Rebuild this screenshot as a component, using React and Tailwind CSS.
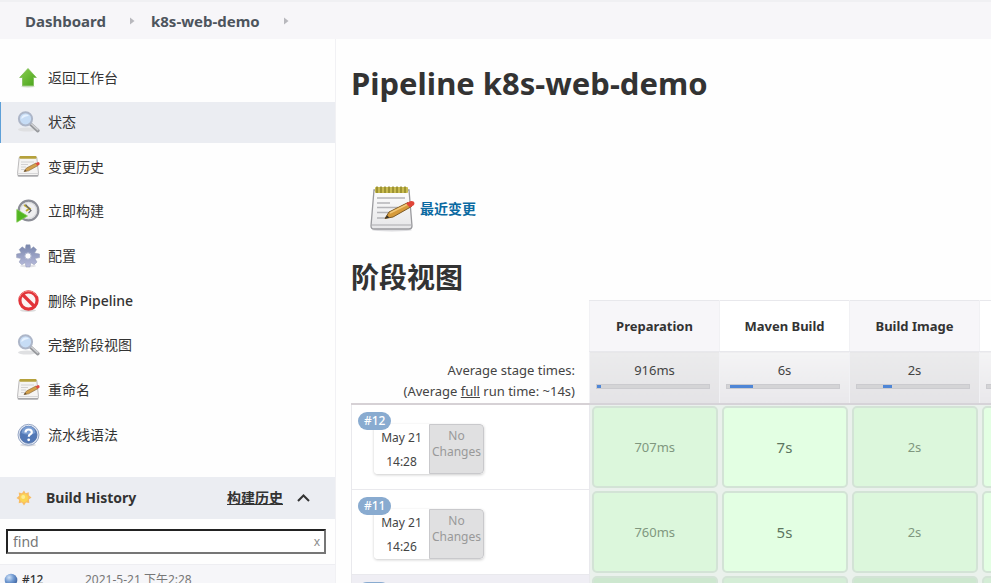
import React from "react";

function ArrowUpIcon() {
  return (
    <svg viewBox="0 0 24 24" className="size-6 shrink-0">
      <defs>
        <linearGradient id="up" x1="0" y1="0" x2="1" y2="1">
          <stop offset="0" stopColor="#8bcf50" />
          <stop offset="1" stopColor="#48a31b" />
        </linearGradient>
      </defs>
      <ellipse cx="12" cy="20.5" rx="7" ry="1.2" fill="#dfe6da" />
      <path d="M12 2.500 L20.300 11.500 H17.500 V19.800 H6.500 V11.500 H3.700 Z" fill="url(#up)" stroke="#7cbb54" strokeWidth="0.8" strokeLinejoin="round" />
    </svg>
  );
}

function SearchIcon() {
  return (
    <svg viewBox="0 0 24 24" className="size-6 shrink-0">
      <ellipse cx="11" cy="19.500" rx="9" ry="2" fill="#dfe0e2" />
      <path d="M15 14.500 L21.800 20.600" stroke="#97999d" strokeWidth="3.600" strokeLinecap="round" />
      <path d="M15.500 14 L21.800 19.600" stroke="#cfd0d3" strokeWidth="1.600" strokeLinecap="round" />
      <circle cx="9.500" cy="8.800" r="6.600" fill="#c6dcf5" stroke="#adb6c8" strokeWidth="2" />
      <path d="M5.300 9 A4.500 4.500 0 0 1 13 5.800 Q9 6 5.300 9Z" fill="#e6f2ff" />
    </svg>
  );
}

function NotepadIcon() {
  return (
    <svg viewBox="0 0 48 48" className="size-12 shrink-0">
      <defs>
        <linearGradient id="paper" x1="0" y1="0" x2="0" y2="1">
          <stop offset="0" stopColor="#fdfdfd" />
          <stop offset="1" stopColor="#e6e6e8" />
        </linearGradient>
      </defs>
      <ellipse cx="24" cy="45" rx="20" ry="1.500" fill="#dddde0" />
      <path d="M6 5 H41 L44 41 Q44 44 41 44 H6 Q3 44 3 41 Z" fill="url(#paper)" stroke="#9a9a9e" strokeWidth="1.300" />
      <path d="M3.500 40 H43.500" stroke="#a9a9ad" strokeWidth="1.200" />
      <rect x="7" y="2" width="33" height="6" rx="1" fill="#c8bb50" />
      <path d="M9 1.500V8M13 1.500V8M17 1.500V8M21 1.500V8M25 1.500V8M29 1.500V8M33 1.500V8M37 1.500V8" stroke="#948a2c" strokeWidth="1.600" />
      <path d="M9 13H37M9 18H22M9 22.500H30M9 27.500H24M9 33H18" stroke="#b4b4b8" strokeWidth="1.300" />
      <path d="M17 33.500 L21 27 L40 17.500 L43.500 21.500 L25 32 Z" fill="#d69a3a" stroke="#7d5a25" strokeWidth="1" />
      <path d="M22 28 L41 18.500" stroke="#f2c878" strokeWidth="1.400" />
      <path d="M38 18.500 L42 16.200 Q46 15.500 46.500 18 L46 20 L42 22.500 Z" fill="#e04438" />
      <path d="M17 33.500 L19 30.200 L21.500 32.700Z" fill="#3b3428" />
    </svg>
  );
}

function SmallNotepadIcon() {
  return (
    <svg viewBox="0 0 24 24" className="size-6 shrink-0">
      <path d="M3.200 2.500 H20.800 L22.500 18.500 Q22.500 21 21 21 H3 Q1.500 21 1.500 18.500 Z" fill="#f5f4f3" stroke="#b4b3b4" strokeWidth="0.900" />
      <path d="M1.800 20.800 H22.200" stroke="#a3a3a6" strokeWidth="1.400" />
      <path d="M2 18.500 H22" stroke="#cfcfd1" strokeWidth="0.800" />
      <rect x="3.500" y="1" width="17" height="2.800" rx="0.800" fill="#b5a13c" />
      <path d="M5 7H18M5 9.500H12M5 12H10M5 14.500H9" stroke="#cecdce" strokeWidth="0.900" />
      <path d="M8 16.500 L10.500 13 L20 8 L22 10.500 L12.500 15.800 Z" fill="#d3a04a" stroke="#8f6f3c" strokeWidth="0.700" />
      <path d="M19.500 8.300 L22.300 7 Q24 7.500 23.600 9.400 L21.500 10.800Z" fill="#df4b42" />
      <path d="M8 16.500 L9.300 14.700 L10.700 16.200Z" fill="#5a4a36" />
    </svg>
  );
}

function ClockIcon() {
  return (
    <svg viewBox="0 0 24 24" className="size-6 shrink-0">
      <circle cx="12.500" cy="11.500" r="9.800" fill="#efeff0" stroke="#8b8d96" strokeWidth="2.200" />
      <circle cx="12.500" cy="11.500" r="8" fill="none" stroke="#d2d3d6" strokeWidth="0.800" />
      <path d="M8 6 L13.500 9.500 L10 12" fill="none" stroke="#c0aa2c" strokeWidth="2" />
      <path d="M9.500 5.500 L15 11.500 L12.500 14" fill="none" stroke="#65666b" strokeWidth="1.200" />
      <path d="M0.800 10.500 L11.500 17 L0.800 23.200 Z" fill="#52b521" stroke="#80cb52" strokeWidth="0.800" />
    </svg>
  );
}

function GearIcon() {
  return (
    <svg viewBox="0 0 24 24" className="size-6 shrink-0">
      <defs>
        <linearGradient id="gear" x1="0" y1="0" x2="0" y2="1">
          <stop offset="0" stopColor="#7886ac" />
          <stop offset="1" stopColor="#b9bcdc" />
        </linearGradient>
      </defs>
      <ellipse cx="12" cy="22" rx="8" ry="1.300" fill="#e3e3e7" />
      <path
        d="M10 0.800H14L14.800 5 17.500 2.800 20.600 5.600 18.500 9 23.500 10V13.600L18.900 14.600 21 18 18.200 20.800 14.900 18.700 14 23H10L9.200 18.700 5.800 20.800 3.100 18 5.200 14.600 0.600 13.600V10L5.200 9 3.200 5.600 6.200 2.800 9.200 5Z"
        fill="url(#gear)"
        stroke="#939bb6"
        strokeWidth="0.5"
        strokeLinejoin="round"
      />
      <circle cx="12" cy="12" r="3.200" fill="#fdfdff" stroke="#a9b1cc" />
    </svg>
  );
}

function ForbiddenIcon() {
  return (
    <svg viewBox="0 0 24 24" className="size-6 shrink-0">
      <ellipse cx="12" cy="21.500" rx="8" ry="1.500" fill="#dcdcdc" />
      <circle cx="12.500" cy="11.500" r="8.600" fill="#fbf3f3" stroke="#e2343a" strokeWidth="3.200" />
      <path d="M6.500 5.500 L18.500 17.500" stroke="#e2343a" strokeWidth="3.200" />
      <path d="M3.500 8.500 A9.500 9.500 0 0 1 20.500 6.500" fill="none" stroke="#f58a86" strokeWidth="1" />
    </svg>
  );
}

function HelpIcon() {
  return (
    <svg viewBox="0 0 24 24" className="size-6 shrink-0">
      <ellipse cx="12" cy="22" rx="8" ry="1.400" fill="#dcdde0" />
      <circle cx="12.500" cy="11.800" r="10.500" fill="#dfe6f2" stroke="#98a8c6" strokeWidth="1" />
      <circle cx="12.500" cy="11.800" r="8.500" fill="#5278b6" stroke="#4a6ba3" strokeWidth="0.800" />
      <path d="M5.500 10 A7 7 0 0 1 19.500 10 Q12 13 5.500 10Z" fill="#7b9ed2" />
      <path d="M9.500 9.500 Q9.500 6.500 12.700 6.500 Q15.800 6.500 15.800 9.200 Q15.800 10.800 14 11.600 Q12.800 12.200 12.800 13.800" fill="none" stroke="#fff" strokeWidth="2.200" />
      <circle cx="12.700" cy="16.800" r="1.400" fill="#fff" />
    </svg>
  );
}

function SunIcon() {
  return (
    <svg viewBox="0 0 16 16" className="size-4 shrink-0">
      <path d="M8 0.500 9.600 3.300 12.800 2.200 12.800 5.300 15.500 7.500 12.900 9.600 13.300 13 10 12.600 8 15.500 6 12.600 2.700 13.300 3.100 9.700 0.500 8 3.200 5.700 2.700 2.500 6 3.300Z" fill="#f8bd63" />
      <circle cx="8" cy="8" r="4.200" fill="#fbd552" />
      <circle cx="7.200" cy="7" r="2" fill="#fdec93" />
    </svg>
  );
}

function BallIcon() {
  return (
    <svg viewBox="0 0 14 14" className="size-[14px] shrink-0">
      <defs>
        <radialGradient id="ball" cx="0.35" cy="0.3" r="0.75">
          <stop offset="0" stopColor="#cfe2f8" />
          <stop offset="0.5" stopColor="#6f98d0" />
          <stop offset="1" stopColor="#3d629e" />
        </radialGradient>
      </defs>
      <circle cx="7" cy="7" r="6.300" fill="url(#ball)" />
    </svg>
  );
}

function Separator() {
  return (
    <svg viewBox="0 0 5 8" className="h-2 w-[5px]" aria-hidden="true">
      <path d="M0 0.500 L4.500 4 L0 7.500Z" fill="#b8b8bd" />
    </svg>
  );
}

const tasks = [
  { label: "返回工作台", icon: <ArrowUpIcon /> },
  { label: "状态", icon: <SearchIcon />, active: true },
  { label: "变更历史", icon: <SmallNotepadIcon /> },
  { label: "立即构建", icon: <ClockIcon /> },
  { label: "配置", icon: <GearIcon /> },
  { label: "删除 ", latin: "Pipeline", icon: <ForbiddenIcon /> },
  { label: "完整阶段视图", icon: <SearchIcon /> },
  { label: "重命名", icon: <SmallNotepadIcon /> },
  { label: "流水线语法", icon: <HelpIcon /> },
];

const stages = [
  { name: "Preparation", average: "916ms", before: 0, share: 4 },
  { name: "Maven Build", average: "6s", before: 3, share: 20 },
  { name: "Build Image", average: "2s", before: 23, share: 8 },
];

const runs = [
  { id: "#12", date: "May 21", time: "14:28", cells: ["707ms", "7s", "2s"] },
  { id: "#11", date: "May 21", time: "14:26", cells: ["760ms", "5s", "2s"] },
  { id: "", date: "", time: "", cells: ["", "", ""], shaded: true },
];

function Sidebar() {
  return (
    <aside className="w-[336px] shrink-0 border-r border-[#f1f1f4]">
      <nav className="mt-[18px] flex h-[398px] flex-col justify-between">
        {tasks.map((task) => (
          <a
            key={task.label}
            href="#"
            className={
              "flex h-[41px] items-center gap-2 border-l pl-[15px] text-[#333333] " +
              (task.active ? "border-[#5ea0d8] bg-[#ebedf2]" : "border-transparent")
            }
          >
            {task.icon}
            <span>
              {task.label}
              {task.latin && <span className="font-medium">{task.latin}</span>}
            </span>
          </a>
        ))}
      </nav>

      <section className="mt-[22px]">
        <div className="flex h-[42px] items-center bg-[#ebedf2] pl-4 font-bold text-[#333333]">
          <SunIcon />
          <h2 className="ml-[14px]">Build History</h2>
          <a href="#" className="ml-auto underline">构建历史</a>
          <button type="button" aria-label="Collapse" className="mr-[25px] ml-[14px]">
            <svg viewBox="0 0 13 8" className="h-2 w-[13px]" fill="none" stroke="#333333" strokeWidth="2">
              <path d="M1 7 L6.500 1.500 L12 7" />
            </svg>
          </button>
        </div>
        <div className="mt-[10px] mr-[9px] mb-[10px] ml-[6px] flex h-[25px] items-center border-2 border-[#767676] border-t-[#222222] border-l-[#222222] bg-white pr-1 pl-[5px]">
          <input
            type="text"
            aria-label="find"
            placeholder="find"
            className="min-w-0 flex-1 bg-transparent outline-none placeholder:text-[#777777]"
          />
          <button type="button" aria-label="Clear" className="text-xs leading-4 text-[#8c8c8c]">x</button>
        </div>
        <div className="flex h-[30px] items-center border-t border-[#eeeef2] bg-[#f6f6f9] pl-1 text-xs">
          <BallIcon />
          <a href="#" className="ml-1 w-[63px] font-medium text-[#333333]">#12</a>
          <a href="#" className="text-[#777777]">2021-5-21 下午2:28</a>
        </div>
      </section>
    </aside>
  );
}

function RunCard({ run }) {
  return (
    <div className="relative h-[84px] pt-[19px] pl-[22px]">
      <span className="absolute top-[7px] left-[6px] h-[18px] min-w-8 rounded-full bg-[#89abd0] px-[6px] text-xs leading-[18px] font-medium text-white">
        {run.id}
      </span>
      {run.date && (
        <div className="flex h-[50px] w-[110px] overflow-hidden rounded-sm text-center shadow-[0_1px_3px_rgba(0,0,0,0.2)]">
          <div className="w-[55px] bg-white text-xs leading-6 text-[#444444]">
            <div className="pt-[2px]">{run.date}</div>
            <div>{run.time}</div>
          </div>
          <div className="flex-1 rounded-r-sm border border-[#c9c9cc] bg-[#e0e0e1] pt-[3px] text-xs leading-4 text-[#999999]">
            <div>No</div>
            <div className="flex justify-center">Changes</div>
          </div>
        </div>
      )}
    </div>
  );
}

function cellTone(i, shaded) {
  const odd = i % 2 === 1;
  if (shaded) return odd ? "bg-[#d4edd6]" : "bg-[#cde7cf]";
  return odd ? "bg-[#e3ffe3]" : "bg-[#dcf7dc]";
}

function StageView() {
  return (
    <table className="w-[758px] table-fixed border-collapse">
      <colgroup>
        <col className="w-[238px]" />
        <col className="w-[130px]" />
        <col className="w-[130px]" />
        <col className="w-[130px]" />
        <col className="w-[130px]" />
      </colgroup>
      <thead>
        <tr className="h-[51px]">
          <td rowSpan={2} className="border-b-2 border-[#d6d1d5] pr-[14px] pb-px text-right align-bottom text-[13px] leading-[21px] text-[#444444]">
            <div>Average stage times:</div>
            <div>(Average <span className="underline">full</span> run time: ~14s)</div>
          </td>
          {stages.map((stage) => (
            <th
              key={stage.name}
              scope="col"
              className="border border-[#e8e8ec] border-x-[#f1f1f4] text-[13px] font-bold text-[#333333] odd:bg-white even:bg-[#f7f6f9]"
            >
              {stage.name}
            </th>
          ))}
          <td className="border border-[#e8e8ec] border-x-[#f1f1f4] bg-white" />
        </tr>
        <tr className="h-[52px]">
          {stages.map((stage) => (
            <td
              key={stage.name}
              className="border-x border-b-2 border-x-[#f1f1f4] border-b-[#d6d3d8] bg-linear-to-b px-[6px] text-center align-top text-[13px] text-[#444444] odd:from-[#ebebec] odd:to-[#e4e3e6] even:from-[#f4f4f5] even:to-[#e9e8eb]"
            >
              <div className="pt-2 leading-5">{stage.average}</div>
              <div className="mt-1 mr-[3px] flex h-[5px] border border-[#cbcbcf] bg-[#d4d4d6]">
                <span style={{ width: stage.before + "%" }} />
                <span className="bg-[#4f86d6]" style={{ width: stage.share + "%" }} />
              </div>
            </td>
          ))}
          <td className="border-b-2 border-b-[#d6d3d8] bg-linear-to-b from-[#f4f4f5] to-[#e9e8eb] px-[6px] align-top">
            <div className="mt-8 h-[5px] border border-[#cbcbcf] bg-[#d4d4d6]" />
          </td>
        </tr>
      </thead>
      <tbody>
        {runs.map((run, n) => (
          <tr key={n} className="h-[85px]">
            <td className={"border border-[#e9e9ed] p-0 align-top " + (run.shaded ? "bg-[#efeef4]" : "bg-white")}>
              <RunCard run={run} />
            </td>
            {[...run.cells, ""].map((cell, i) => (
              <td key={i} className="h-[85px] bg-[#eaf1ec] px-[2px] py-px">
                <div
                  className={
                    "flex h-[82px] items-center justify-center rounded-[5px] border-2 border-[#d3e3d6] " +
                    (i % 2 ? "text-[15px] text-[#5d7560] " : "text-[13px] text-[#80977f] ") +
                    cellTone(i, run.shaded)
                  }
                >
                  {cell}
                </div>
              </td>
            ))}
          </tr>
        ))}
      </tbody>
    </table>
  );
}

export default function App() {
  return (
    <div className="flex h-screen flex-col overflow-hidden bg-[#fefefe] font-['Noto_Sans','Noto_Sans_CJK_SC',sans-serif] text-sm leading-5 text-[#333333]">
      <header className="flex h-[39px] shrink-0 items-center border-t-2 border-[#f0f0f3] bg-[#f7f6f9] pl-[25px] text-[15px] font-bold text-[#4d545d]">
        <a href="#">Dashboard</a>
        <span className="mr-4 ml-6"><Separator /></span>
        <a href="#">k8s-web-demo</a>
        <span className="ml-6"><Separator /></span>
      </header>
      <div className="flex min-h-0 flex-1">
        <Sidebar />
        <main className="min-w-0 flex-1 overflow-hidden pl-[15px]">
          <h1 className="pt-6 text-[31px] leading-10 font-bold">Pipeline k8s-web-demo</h1>
          <a href="#" className="mt-[82px] ml-[17px] flex items-center gap-1 font-bold text-[#0b6aa2]">
            <NotepadIcon />
            <span>最近变更</span>
          </a>
          <h2 className="mt-6 text-[28px] leading-10 font-bold">阶段视图</h2>
          <div className="mt-[3px]">
            <StageView />
          </div>
        </main>
      </div>
    </div>
  );
}
